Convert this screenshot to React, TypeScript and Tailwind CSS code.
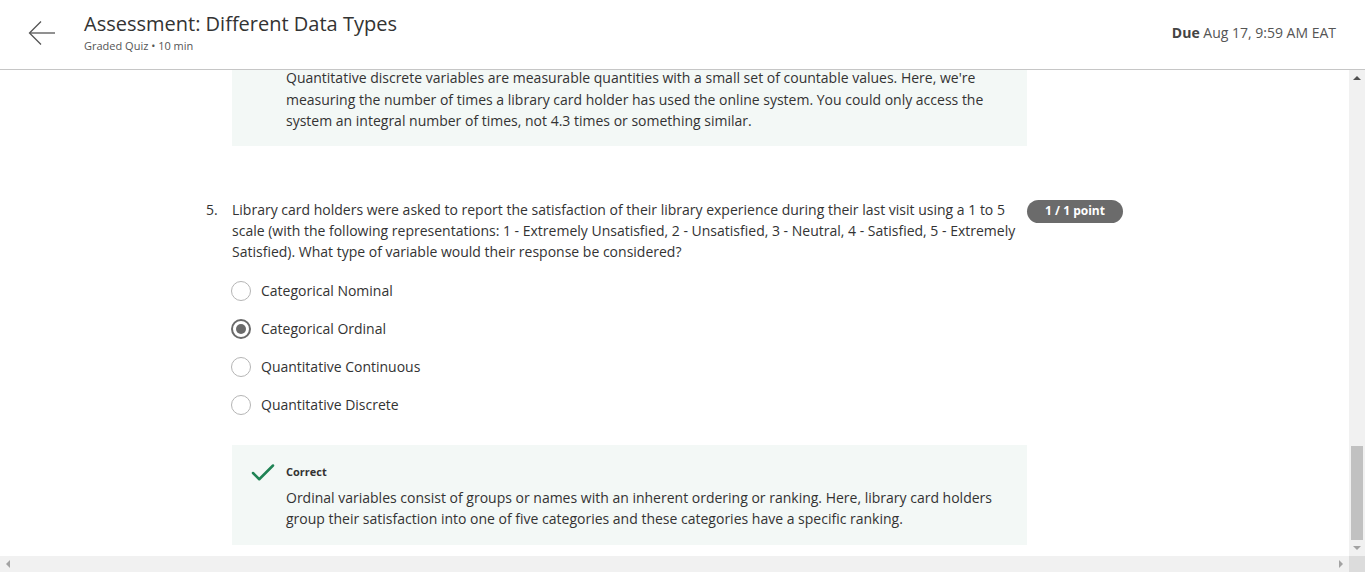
import { Check } from "lucide-react";

const FONT = "font-['Open_Sans','Liberation_Sans',sans-serif]";

const OPTIONS = [
  { label: "Categorical Nominal", checked: false },
  { label: "Categorical Ordinal", checked: true },
  { label: "Quantitative Continuous", checked: false },
  { label: "Quantitative Discrete", checked: false },
];

function Radio({ checked }: { checked: boolean }) {
  if (checked) {
    return (
      <span className="flex h-[20px] w-[20px] items-center justify-center rounded-full border-2 border-[#6a6a6a] bg-white">
        <span className="h-[10px] w-[10px] rounded-full bg-[#6a6a6a]" />
      </span>
    );
  }
  return <span className="h-[20px] w-[20px] rounded-full border border-[#b5b5b5] bg-white" />;
}

function Header() {
  return (
    <header className="flex h-[70px] shrink-0 items-start border-b border-[#c6c6c6] bg-white">
      <button type="button" aria-label="Back" className="ml-[28px] mt-[20px] text-[#555]">
        <svg width="28" height="26" viewBox="0 0 28 26" fill="none" stroke="currentColor" strokeWidth="1.3">
          <path d="M27 13H2" />
          <path d="M13 1.5L1.5 13L13 24.5" />
        </svg>
      </button>
      <div className="ml-[28px] mt-[10px] flex flex-col">
        <h1 className="text-[20px] leading-[28px] text-[#333]">Assessment: Different Data Types</h1>
        <p className="text-[11px] leading-[16px] text-[#555]">Graded Quiz • 10 min</p>
      </div>
      <div className="ml-auto mr-[29px] mt-[23px] text-[14px] leading-[20px] text-[#555]">
        <span className="font-bold text-[#444]">Due</span> Aug 17, 9:59 AM EAT
      </div>
    </header>
  );
}

function VerticalScrollbar() {
  return (
    <div className="flex w-[16px] shrink-0 flex-col items-center bg-[#f1f1f1]">
      <span className="mt-[6px] h-0 w-0 border-x-[4px] border-b-[4px] border-x-transparent border-b-[#505050]" />
      <div className="flex-1" />
      <div className="h-[94px] w-[12px] bg-[#c1c1c1]" />
      <span className="mb-[6px] mt-[6px] h-0 w-0 border-x-[4px] border-t-[4px] border-x-transparent border-t-[#a3a3a3]" />
    </div>
  );
}

function HorizontalScrollbar() {
  return (
    <div className="flex h-[16px] shrink-0">
      <div className="flex flex-1 items-center justify-between bg-[#f1f1f1] px-[6px]">
        <span className="h-0 w-0 border-y-[4px] border-r-[4px] border-y-transparent border-r-[#a3a3a3]" />
        <span className="h-0 w-0 border-y-[4px] border-l-[4px] border-y-transparent border-l-[#a3a3a3]" />
      </div>
      <div className="w-[16px] bg-[#dcdcdc]" />
    </div>
  );
}

export default function App() {
  return (
    <div className={`flex h-[572px] w-[1365px] flex-col overflow-hidden bg-white ${FONT}`}>
      <Header />
      <div className="flex min-h-0 flex-1">
        <main className="min-w-0 flex-1 overflow-hidden">
          <div className="ml-[232px] w-[795px]">
            {/* previous question's feedback, scrolled partly out of view */}
            <div className="-mt-[3px] bg-[#f3f8f6] pb-[14px] pl-[54px] pr-[30px]">
              <p className="text-[14px] leading-[21.5px] text-[#333]">
                Quantitative discrete variables are measurable quantities with a small set of countable values. Here, we're
                measuring the number of times a library card holder has used the online system. You could only access the
                system an integral number of times, not 4.3 times or something similar.
              </p>
            </div>
          </div>

          <section className="mt-[53px] flex">
            <div className="flex w-[1027px] pl-[206px]">
              <span className="w-[26px] shrink-0 text-[14px] leading-[21px] text-[#333]">5.</span>
              <p className="text-[14px] leading-[21px] text-[#333]">
                Library card holders were asked to report the satisfaction of their library experience during their last visit using a 1 to 5
                scale (with the following representations: 1 - Extremely Unsatisfied, 2 - Unsatisfied, 3 - Neutral, 4 - Satisfied, 5 - Extremely
                Satisfied). What type of variable would their response be considered?
              </p>
            </div>
            <span className="mt-[1px] flex h-[23px] w-[96px] items-center justify-center rounded-full bg-[#6b6b6b] text-[12px] font-bold text-white">
              1 / 1 point
            </span>
          </section>

          <ul className="ml-[231px] mt-[19px] flex flex-col gap-[18px]">
            {OPTIONS.map((option) => (
              <li key={option.label} className="flex h-[20px] items-center gap-[10px]">
                <Radio checked={option.checked} />
                <span className="text-[14px] text-[#333]">{option.label}</span>
              </li>
            ))}
          </ul>

          <div className="ml-[232px] mt-[30px] w-[795px] bg-[#f3f8f6] pb-[16px] pl-[16px] pr-[30px] pt-[13px]">
            <div className="flex items-center gap-[8px]">
              <Check className="h-[30px] w-[30px] text-[#1f8354]" strokeWidth={2} />
              <span className="text-[11px] font-bold text-[#333]">Correct</span>
            </div>
            <p className="-mt-[1px] pl-[38px] text-[14px] leading-[21px] text-[#333]">
              Ordinal variables consist of groups or names with an inherent ordering or ranking. Here, library card holders
              group their satisfaction into one of five categories and these categories have a specific ranking.
            </p>
          </div>
        </main>
        <VerticalScrollbar />
      </div>
      <HorizontalScrollbar />
    </div>
  );
}
